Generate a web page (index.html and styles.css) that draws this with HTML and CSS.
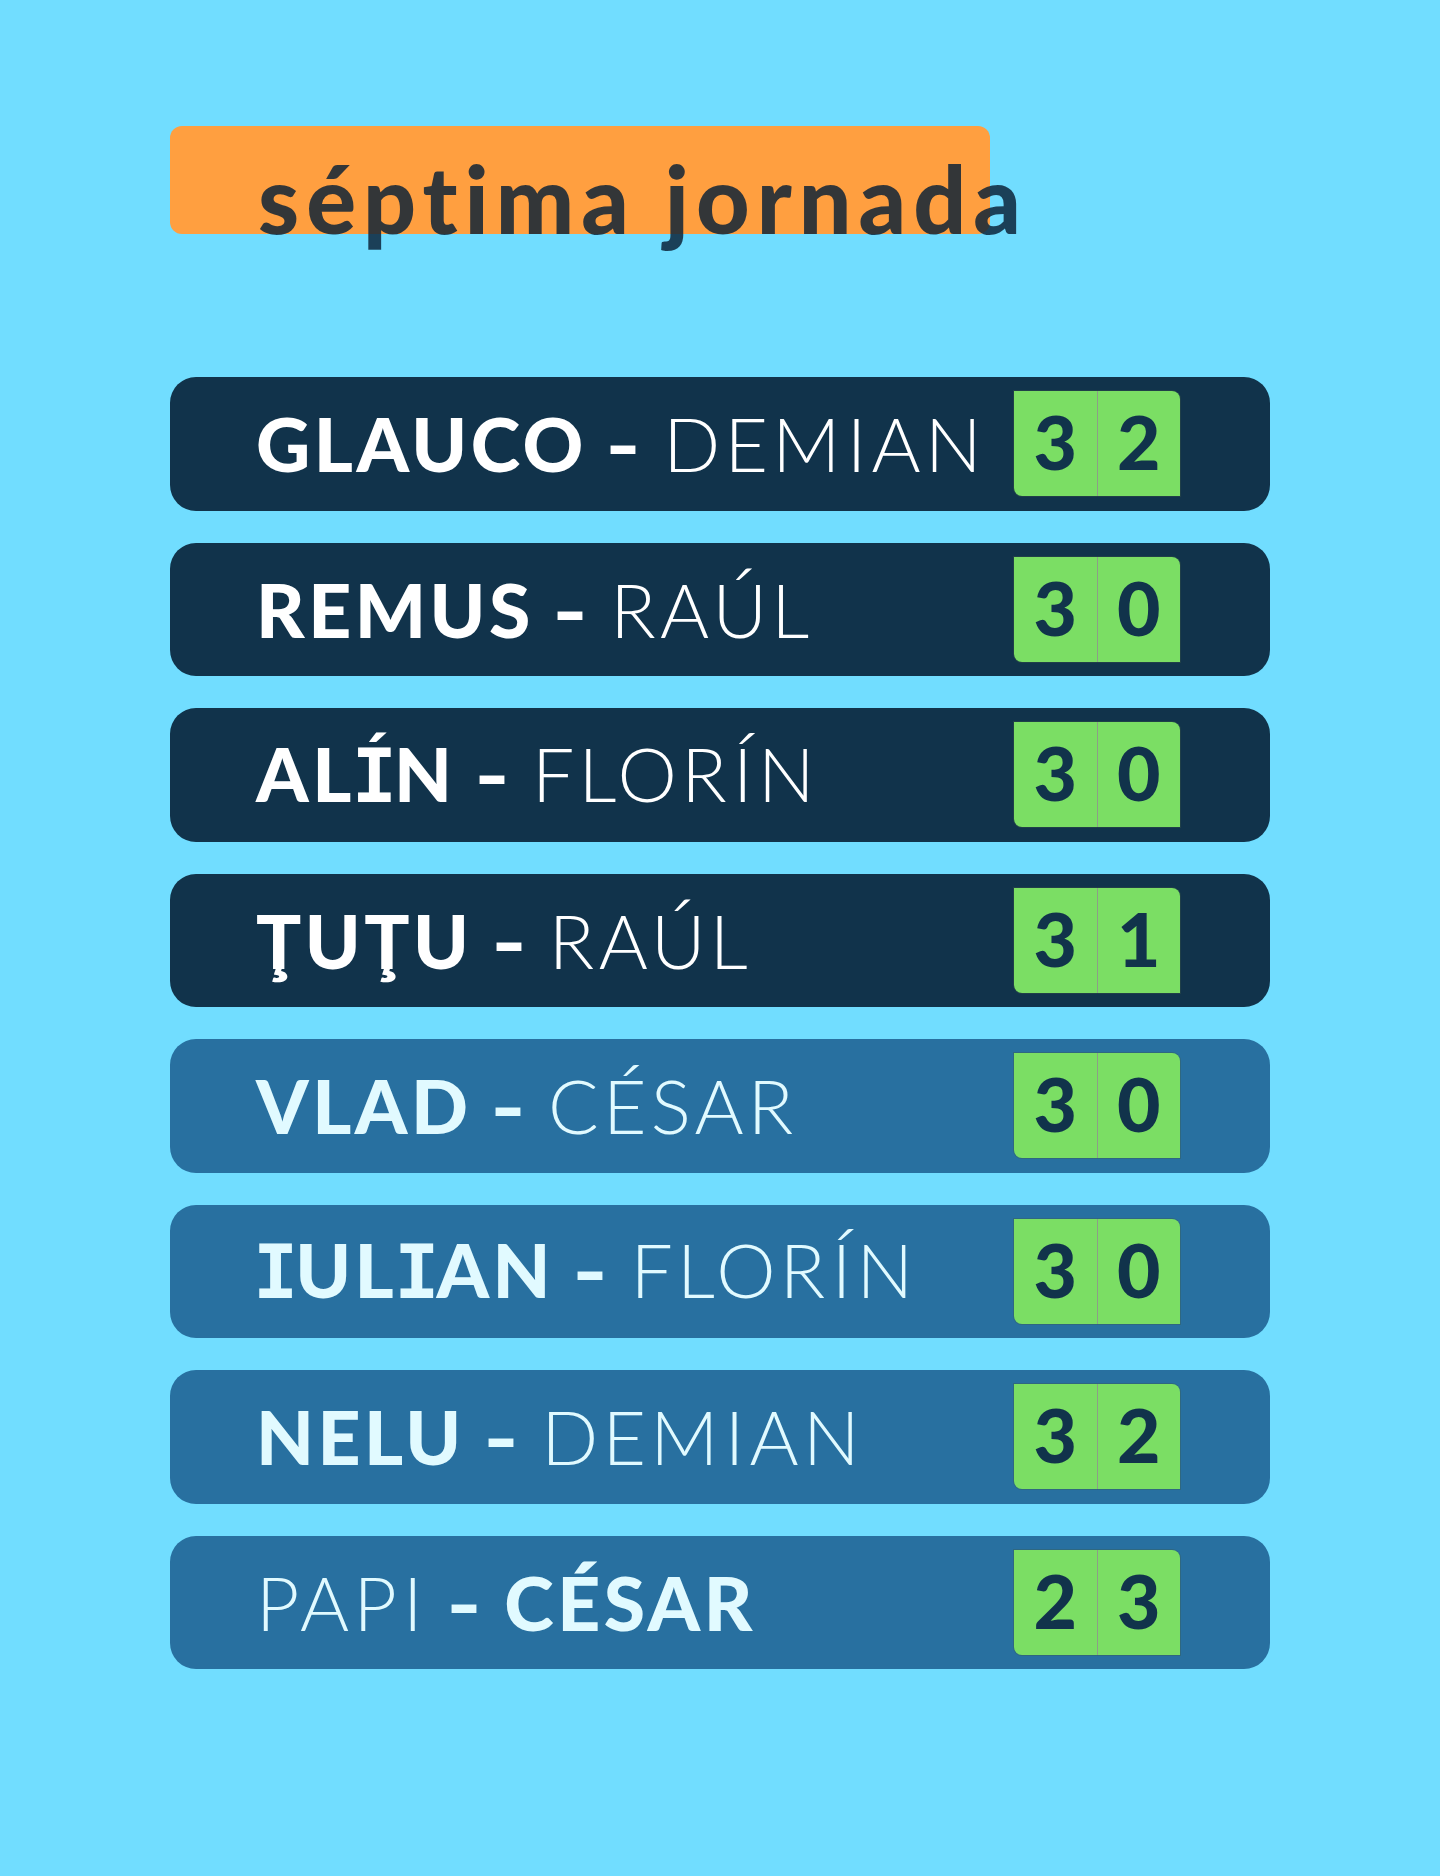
FILE: index.html
```html
<!DOCTYPE html>
<html lang="es">
<head>
<meta charset="utf-8">
<title>séptima jornada</title>
<link rel="stylesheet" href="styles.css">
</head>
<body>
<main class="page">
  <header class="title">
    <h1 class="title-text">séptima jornada</h1>
  </header>
  <ul class="matches">
    <li class="match match--dark">
      <p class="names"><b class="strong">GLAUCO</b> <b class="dash">-</b> <span class="light">DEM<span class="i">I</span>AN</span></p>
      <div class="score"><span class="cell">3</span><span class="cell">2</span></div>
    </li>
    <li class="match match--dark">
      <p class="names"><b class="strong">REMUS</b> <b class="dash">-</b> <span class="light">RAÚL</span></p>
      <div class="score"><span class="cell">3</span><span class="cell">0</span></div>
    </li>
    <li class="match match--dark">
      <p class="names"><b class="strong">AL<span class="i">Í</span>N</b> <b class="dash">-</b> <span class="light">FLOR<span class="i">Í</span>N</span></p>
      <div class="score"><span class="cell">3</span><span class="cell">0</span></div>
    </li>
    <li class="match match--dark">
      <p class="names"><b class="strong">ŢUŢU</b> <b class="dash">-</b> <span class="light">RAÚL</span></p>
      <div class="score"><span class="cell">3</span><span class="cell">1</span></div>
    </li>
    <li class="match match--light">
      <p class="names"><b class="strong">VLAD</b> <b class="dash">-</b> <span class="light">CÉSAR</span></p>
      <div class="score"><span class="cell">3</span><span class="cell">0</span></div>
    </li>
    <li class="match match--light">
      <p class="names"><b class="strong"><span class="i">I</span>UL<span class="i">I</span>AN</b> <b class="dash">-</b> <span class="light">FLOR<span class="i">Í</span>N</span></p>
      <div class="score"><span class="cell">3</span><span class="cell">0</span></div>
    </li>
    <li class="match match--light">
      <p class="names"><b class="strong">NELU</b> <b class="dash">-</b> <span class="light">DEM<span class="i">I</span>AN</span></p>
      <div class="score"><span class="cell">3</span><span class="cell">2</span></div>
    </li>
    <li class="match match--light">
      <p class="names"><span class="light">PAP<span class="i">I</span></span> <b class="dash">-</b> <b class="strong">CÉSAR</b></p>
      <div class="score"><span class="cell">2</span><span class="cell">3</span></div>
    </li>
  </ul>
</main>
</body>
</html>
```

FILE: styles.css
```css
* {
  box-sizing: border-box;
}

html,
body {
  margin: 0;
  padding: 0;
}

body {
  background: #71ddff;
  font-family: "Lato", "Liberation Sans", sans-serif;
  min-height: 1876px;
}

.page {
  padding: 126px 170px 0 170px;
}

.title {
  width: 820px;
  height: 108px;
  background: #ff9f40;
  border-radius: 12px;
  padding: 26px 0 0 88px;
}

.title-text {
  margin: 0;
  font-size: 93px;
  line-height: 1;
  font-weight: 900;
  white-space: nowrap;
  color: rgba(10, 33, 54, 0.83);
  letter-spacing: 7px;
  font-variant-ligatures: none;
}

.matches {
  list-style: none;
  margin: 143px 0 0 0;
  padding: 0;
  display: flex;
  flex-direction: column;
  gap: 32px;
}

.match {
  height: 133.5px;
  border-radius: 26px;
  display: flex;
  align-items: center;
  padding: 0 90px 0 86px;
}

.match--dark {
  background: #11334b;
  color: #ffffff;
}

.match--light {
  background: #2870a0;
  color: #e1faff;
}

.names {
  margin: 0;
  font-size: 75px;
  line-height: 1;
  white-space: nowrap;
  word-spacing: 4px;
}

.strong {
  font-weight: 900;
  letter-spacing: 3.5px;
}

.dash {
  font-weight: 900;
  display: inline-block;
  transform: scaleX(1.25);
  margin: 0 3px 0 -1px;
}

.light {
  font-weight: 300;
  letter-spacing: 4.3px;
}

.strong .i {
  font-family: "DejaVu Sans Mono", "Liberation Mono", monospace;
  font-weight: 700;
  letter-spacing: 0;
  margin: 0 -3px;
}

.light .i {
  margin: 0 1px 0 2px;
}

.score {
  margin-left: auto;
  display: flex;
  width: 166px;
  height: 105px;
  box-shadow: 0 0 0 1px rgba(60, 90, 70, 0.35);
  border-radius: 0 8px 0 8px;
}

.cell {
  flex: 1;
  display: flex;
  align-items: center;
  justify-content: center;
  background: #7bde64;
  color: #11334b;
  font-size: 75px;
  font-weight: 900;
  line-height: 1;
  padding-bottom: 4px;
}

.cell:first-child {
  border-radius: 0 0 0 8px;
  border-right: 1.5px solid #8c9f86;
}

.cell:last-child {
  border-radius: 0 8px 0 0;
}
```
